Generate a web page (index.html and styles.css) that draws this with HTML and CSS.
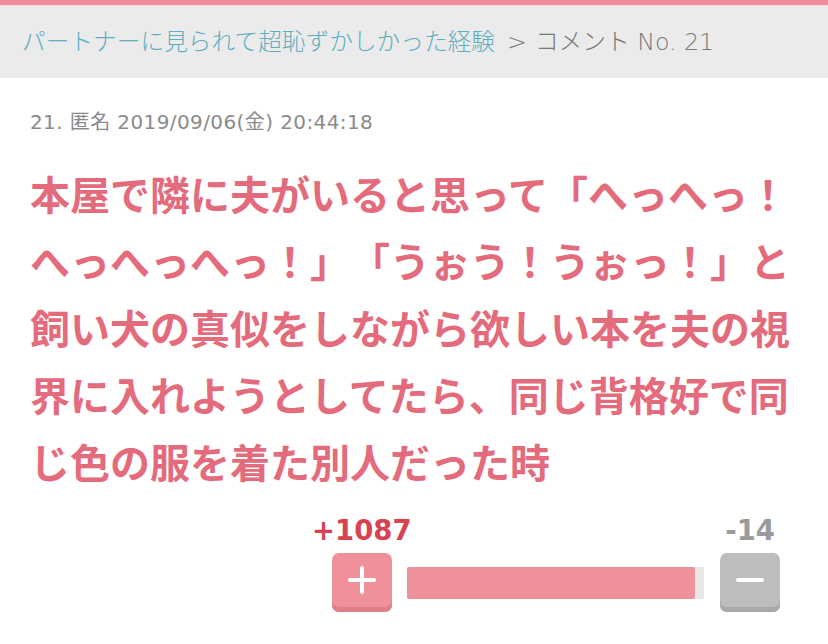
FILE: index.html
```html
<!DOCTYPE html>
<html lang="ja">
<head>
    <meta charset="UTF-8">
    <title>コメント No. 21</title>
    <link rel="stylesheet" href="styles.css">
</head>
<body>
<div class="crumb">
    <a href="#">パートナーに見られて超恥ずかしかった経験</a><span class="sep">&gt;</span>コメント No. 21
</div>
<div class="comment">
    <div class="meta">21. 匿名 2019/09/06(金) 20:44:18</div>
    <div class="body">本屋で隣に夫がいると思って「へっへっ！へっへっへっ！」「うぉう！うぉっ！」と飼い犬の真似をしながら欲しい本を夫の視界に入れようとしてたら、同じ背格好で同じ色の服を着た別人だった時</div>
    <div class="vote">
        <div class="counts">
            <span class="plus-num">+1087</span>
            <span class="minus-num">-14</span>
        </div>
        <div class="row">
            <div class="btn plus"><span class="h"></span><span class="v"></span></div>
            <div class="bar"><div class="fill" style="width:97%"></div></div>
            <div class="btn minus"><span class="h"></span></div>
        </div>
    </div>
</div>
</body>
</html>
```

FILE: styles.css
```css
body{margin:0;background:#fff;font-family:"Noto Sans CJK JP","Noto Sans",sans-serif;border-top:5px solid #ef8f9b;}
.crumb{background:#ebebeb;height:73px;line-height:72px;padding-left:22px;font-family:"DejaVu Sans","Noto Sans CJK JP",sans-serif;font-size:23.7px;font-weight:300;color:#777;border-top:1px solid #f6d6db;box-sizing:border-box;}
.crumb a{color:#62aec1;text-decoration:none;}
.crumb .sep{margin:0 8px 0 12px;}
.comment{padding:0 30px;}
.meta{font-family:"DejaVu Sans","Noto Sans CJK JP",sans-serif;font-size:20px;letter-spacing:0.4px;color:#8a8a8a;margin-top:30px;line-height:28px;}
.body{font-size:40px;font-weight:bold;color:#e46b7b;line-height:67px;margin-top:24px;width:768px;text-spacing-trim:space-all;}
.vote{margin-top:20px;width:448px;margin-left:302px;}
.counts{display:flex;justify-content:space-between;margin:0 5px 0 -20px;font-family:"DejaVu Sans",sans-serif;font-weight:bold;font-size:27.5px;line-height:30px;}
.plus-num{color:#d9434f;}
.minus-num{color:#9a9a9a;}
.row{display:flex;align-items:center;margin-top:8px;}
.btn{flex:none;width:60px;height:59px;border-radius:7px;position:relative;box-sizing:border-box;}
.plus{background:#ef919b;box-shadow:inset 0 -5px 0 #e07f8a;}
.minus{background:#bdbdbd;box-shadow:inset 0 -5px 0 #a9a9a9;}
.btn .h{position:absolute;left:16px;top:25px;width:28px;height:4px;background:#fff;border-radius:2px;}
.btn .v{position:absolute;left:28px;top:13px;width:4px;height:28px;background:#fff;border-radius:2px;}
.bar{flex:none;width:297px;height:32px;background:#e7e7e7;margin:0 16px 0 15px;border-radius:2px;}
.fill{height:100%;background:#ef919b;border-radius:2px;}
```
